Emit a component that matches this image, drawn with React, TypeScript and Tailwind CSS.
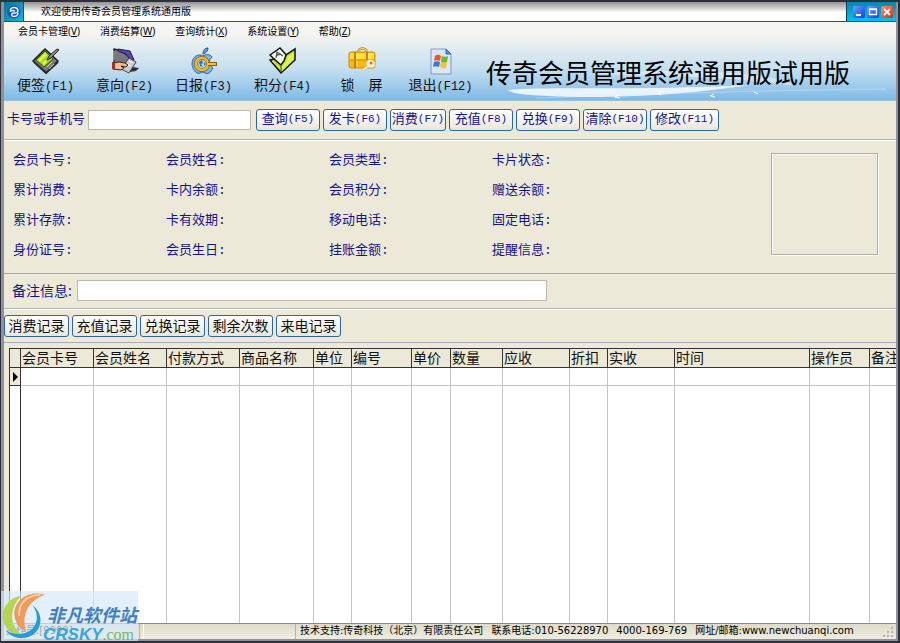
import type { ReactNode } from 'react';

const menus = [
  { text: '会员卡管理', key: 'V' },
  { text: '消费结算', key: 'W' },
  { text: '查询统计', key: 'X' },
  { text: '系统设置', key: 'Y' },
  { text: '帮助', key: 'Z' },
];

const actions = [
  { text: '查询', key: '(F5)', width: 'w-16' },
  { text: '发卡', key: '(F6)', width: 'w-16' },
  { text: '消费', key: '(F7)', width: 'w-14' },
  { text: '充值', key: '(F8)', width: 'w-16' },
  { text: '兑换', key: '(F9)', width: 'w-16' },
  { text: '清除', key: '(F10)', width: 'w-16' },
  { text: '修改', key: '(F11)', width: 'w-[69px]' },
];

const fields = [
  '会员卡号', '会员姓名', '会员类型', '卡片状态',
  '累计消费', '卡内余额', '会员积分', '赠送余额',
  '累计存款', '卡有效期', '移动电话', '固定电话',
  '身份证号', '会员生日', '挂账金额', '提醒信息',
];

const tabs = ['消费记录', '充值记录', '兑换记录', '剩余次数', '来电记录'];

const columns = [
  { name: '会员卡号', width: 'w-[73px]' },
  { name: '会员姓名', width: 'w-[73px]' },
  { name: '付款方式', width: 'w-[73px]' },
  { name: '商品名称', width: 'w-[74px]' },
  { name: '单位', width: 'w-[38px]' },
  { name: '编号', width: 'w-[60px]' },
  { name: '单价', width: 'w-[39px]' },
  { name: '数量', width: 'w-[52px]' },
  { name: '应收', width: 'w-[67px]' },
  { name: '折扣', width: 'w-[38px]' },
  { name: '实收', width: 'w-[67px]' },
  { name: '时间', width: 'w-[135px]' },
  { name: '操作员', width: 'w-[60px]' },
  { name: '备注', width: '' },
];

const NoteIcon = () => (
  <svg width="28" height="28" viewBox="0 0 28 28">
    <path d="M1 14 13 2l13 12-12 12z" fill="#77797b" stroke="#1c1c1c" strokeWidth="1.5" />
    <path d="M2 15l12 11 12-11" fill="none" stroke="#2c2c2c" strokeWidth="2" />
    <path d="M4 13 13 4l8 8-9 8z" fill="#a9d418" stroke="#3f5a0a" />
    <path d="M6 13l7-7 2 2-7 7zM10 16l3-3 2 2-3 3z" fill="#d8f25a" />
    <path d="M15 20l5-5M17 22l5-5" stroke="#c9cbc9" />
    <path d="M27 3l-8 8-4 2 2-4 8-7z" fill="#8a8a8a" stroke="#222" />
  </svg>
);

const IntentIcon = () => (
  <svg width="28" height="28" viewBox="0 0 28 28">
    <path d="M14 24l8-4 6 1-3 3-6 1z" fill="#333" />
    <path d="M3 2l5 1 14 9-4 8-15-4z" fill="#77787e" stroke="#222" strokeWidth="1.3" />
    <path d="M7 2l12 2 4 9-3 1-5-7-8-3z" fill="#5b45ae" stroke="#1e174c" />
    <path d="M18 11l7 4-7 11-8-4z" fill="#c8cdd0" stroke="#444" />
    <path d="M18 14l4 2m-6 1 4 2" stroke="#fff" />
    <path d="M2 16l6-1 6 1 3 2-2 2-5-1 3 2-3 2-8-1z" fill="#f0bd96" stroke="#3b1e18" />
    <path d="M1 15l3 1v7l-3-1z" fill="#a12e28" />
    <path d="M3 4v9" stroke="#b6b7bc" />
  </svg>
);

const ReportIcon = () => (
  <svg width="28" height="28" viewBox="0 0 28 28">
    <path d="M13 7c0-4 2-6 5-6 0 3-2 5-5 6z" fill="#5b9ee5" stroke="#24569a" />
    <path d="M13 9c3-2 7-2 9 1-4 3-3 9 1 11-2 4-5 7-8 5-2-1-3-1-5 0-4 2-8-5-8-9C2 10 8 6 13 9z" fill="#78b5ef" stroke="#2a65ac" />
    <circle cx="12" cy="17" r="6" fill="#b3daf7" stroke="#8d5a08" strokeWidth="4" />
    <circle cx="12" cy="17" r="6" fill="none" stroke="#f6b92e" strokeWidth="2.5" />
    <path d="M9 15l3-2 1 3-2 1 2 3-3-1zM14 15l2 2-2 2z" fill="#2872b7" />
    <path d="M18 17h9" stroke="#8d5a08" strokeWidth="4" />
    <path d="M18 17h8" stroke="#f8c13b" strokeWidth="2" />
  </svg>
);

const PointsIcon = () => (
  <svg width="28" height="28" viewBox="0 0 28 28">
    <path d="M1 8l10-7 9 10-8 8z" fill="#f5f7f4" stroke="#111" strokeWidth="1.5" />
    <path d="M7 11l1-6 6 4M8 8l4-1" fill="none" stroke="#555" strokeWidth="1.3" />
    <path d="M1 13l11 13 14-13V2l-9 6-2 6-3 4-7-6z" fill="#b5d922" stroke="#111" strokeWidth="1.5" />
    <path d="M13 19l4-5 2-5 6-4v7L13 24z" fill="#dcf152" />
    <path d="M3 14l9 8" stroke="#e4f67a" />
    <path d="M12 18v7" stroke="#45560a" />
  </svg>
);

const LockIcon = () => (
  <svg width="28" height="28" viewBox="0 0 28 28">
    <path d="M10 6c0-6 9-6 9 0" fill="none" stroke="#cc8a13" strokeWidth="2.5" />
    <path d="M10 6c0-6 9-6 9 0" fill="none" stroke="#ffe58d" />
    <rect x="1" y="5" width="26" height="16" rx="2" fill="#f9b80e" stroke="#d7870b" />
    <path d="M2 6h24v6H2z" fill="#ffe13a" />
    <path d="M7 5v16M19 5v16" stroke="#b96810" strokeWidth="1.5" />
    <path d="M9 6v14M21 6v9" stroke="#fff08c" />
    <path d="M2 13h24" stroke="#d8890f" />
    <path d="M18 17c0-3 3-5 6-4s4 5 2 7c-2 1-4 1-5 0l-6 4-2-1 6-4z" fill="#fff7e4" stroke="#ecc888" />
    <circle cx="23" cy="16" r="1.5" fill="#e7652a" />
  </svg>
);

const ExitIcon = () => (
  <svg width="28" height="28" viewBox="0 0 28 28">
    <path d="M4 2h15l5 5v20H4z" fill="#dce5fa" stroke="#8197cd" />
    <path d="M19 2v5h5z" fill="#3d8fe0" stroke="#3670b4" />
    <path d="M8 9c3-2 4-1 6 0l-1 5c-2-1-4-1-6 0z" fill="#e75829" />
    <path d="M15 9c2 1 4 1 6 0l-1 6c-2 1-4 1-6 0z" fill="#70b52b" />
    <path d="M7 15c2-1 4-1 6 0l-1 5c-2-1-4-1-6 0z" fill="#3478dc" />
    <path d="M14 15c2 1 4 1 6 0l-1 6c-2 1-4 0-6-1z" fill="#f9c42d" />
  </svg>
);

const tools: { text: string; key: string; icon: ReactNode }[] = [
  { text: '便签', key: '(F1)', icon: <NoteIcon /> },
  { text: '意向', key: '(F2)', icon: <IntentIcon /> },
  { text: '日报', key: '(F3)', icon: <ReportIcon /> },
  { text: '积分', key: '(F4)', icon: <PointsIcon /> },
  { text: '锁　屏', key: '', icon: <LockIcon /> },
  { text: '退出', key: '(F12)', icon: <ExitIcon /> },
];

function TitleBar() {
  return (
    <div className="flex h-5 items-stretch border-b border-[#4a4a4a] bg-gradient-to-b from-[#929292] via-white via-55% to-white">
      <div className="flex w-5 items-center justify-center border-r border-[#164a60] bg-gradient-to-br from-[#0c7094] to-[#18b5e4]">
        <svg width="14" height="14" viewBox="0 0 14 14">
          <circle cx="7" cy="7" r="6.5" fill="#1553b4" />
          <path d="M3 5c2-4 8-3 8 1 0 2-2 2-4 2S4 9 5 11M11 8c0 3-3 4-6 3M3 7c0-1 2-2 5-1" fill="none" stroke="#e3f3ff" strokeWidth="1.5" />
        </svg>
      </div>
      <h1 className="flex flex-1 items-center pl-[17px] text-[10px] text-black">欢迎使用传奇会员管理系统通用版</h1>
      <div className="flex w-[50px] items-center gap-0.5 border-l border-[#0a3b55] bg-gradient-to-b from-[#0787a8] to-[#00c3f2] pl-1.5">
        <button aria-label="最小化" className="h-3 w-3 rounded-xs bg-gradient-to-br from-[#6c9dff] to-[#173fd0]">
          <svg viewBox="0 0 12 12"><path d="M3 9h5" stroke="#fff" strokeWidth="2" /></svg>
        </button>
        <button aria-label="最大化" className="h-3 w-3 rounded-xs bg-gradient-to-br from-[#6c9dff] to-[#173fd0]">
          <svg viewBox="0 0 12 12"><path d="M2.5 3.5h7v5h-7zM2 3h8" fill="none" stroke="#fff" strokeWidth="1.3" /></svg>
        </button>
        <button aria-label="关闭" className="h-3 w-3 rounded-xs bg-gradient-to-br from-[#ff8d68] to-[#d3260a]">
          <svg viewBox="0 0 12 12"><path d="M3 3l6 6M9 3l-6 6" stroke="#fff" strokeWidth="1.8" /></svg>
        </button>
      </div>
    </div>
  );
}

function Header() {
  return (
    <header className="relative border-b border-[#8fc3e4] bg-gradient-to-b from-[#f6f5f2] from-15% via-[#c5dff0] via-60% to-[#7fbae5]">
      <svg className="absolute right-0 bottom-0 h-10 w-[400px]" viewBox="0 0 400 40" preserveAspectRatio="none">
        <path d="M12 30c40-4 130 1 240-5-60 10-140 14-200 11-25-1-38-3-40-6z" fill="#fff" opacity=".8" />
        <path d="M90 14c80-6 190-4 210 12-70-10-130-10-210-12z" fill="#fff" opacity=".4" />
        <path d="M40 38c120-4 230-8 350-9" fill="none" stroke="#dff1fb" opacity=".4" />
        <path d="M118 37l5-2m-4 2 5 1m37-5 4 2m-3-3 3 1" stroke="#fff" />
        <path d="M214 36l4-2m-3 2 4 1m39-5 4 2" stroke="#fff" />
      </svg>
      <nav className="relative flex h-[17px] items-center gap-5 pl-3.5">
        {menus.map((m) => (
          <button key={m.key} className="text-[10px] leading-4 text-black">
            {m.text}(<u>{m.key}</u>)
          </button>
        ))}
      </nav>
      <div className="relative flex items-end pb-[3px]">
        <div className="flex pt-2 pl-0.5">
          {tools.map((t) => (
            <button key={t.text} className="flex w-[79px] flex-col items-center text-[14px] leading-5 text-[#111]">
              {t.icon}
              <span className="whitespace-nowrap">
                {t.text}
                <span className="font-['Liberation_Mono'] text-[12px]">{t.key}</span>
              </span>
            </button>
          ))}
        </div>
        <h2 className="pb-2 pl-1.5 text-[26px] leading-8 whitespace-nowrap text-black">传奇会员管理系统通用版试用版</h2>
      </div>
    </header>
  );
}

const buttonStyle =
  'flex h-[22px] items-center justify-center rounded-[3px] border border-[#2f679c] bg-gradient-to-b from-white to-[#e9e7db] pb-0.5 whitespace-nowrap';

function SearchBar() {
  return (
    <div className="flex items-center gap-[3px] border-b border-[#b3b8ae] pt-2 pb-2 pl-[3px] text-[13px] text-[#14148c] shadow-[0_1px_0_#fff]">
      <label htmlFor="card" className="w-[78px] pb-0.5 whitespace-nowrap">卡号或手机号</label>
      <input id="card" className="mr-0.5 h-5 w-[163px] border border-[#bdbbae] bg-white px-1 outline-none" />
      {actions.map((a) => (
        <button key={a.key} className={`${buttonStyle} ${a.width}`}>
          {a.text}
          <span className="font-['Liberation_Mono'] text-[11px]">{a.key}</span>
        </button>
      ))}
    </div>
  );
}

function MemberInfo() {
  return (
    <section className="flex items-start justify-between border-b border-[#a9a9a2] pt-[3px] pr-[18px] pb-2.5 pl-[9px] text-[13px] text-[#14148c]">
      <div className="grid grid-cols-[153px_163px_163px_auto]">
        {fields.map((f) => (
          <div key={f} className="h-[30px] leading-8">
            {f}<span className="font-['Liberation_Mono']">:</span>
          </div>
        ))}
      </div>
      <div className="mt-2.5 h-[102px] w-[107px] border border-[#b1afaa] shadow-[inset_1px_1px_0_#fff,1px_1px_0_#fff]" />
    </section>
  );
}

function Records() {
  return (
    <div className="min-h-0 flex-1 overflow-hidden pt-[5px] pl-[5px]">
      <table className="h-full w-full table-fixed border-separate border-spacing-0 border-t border-l border-[#333] bg-white text-[14px]">
        <thead>
          <tr className="h-[19px] bg-[#ece9d8]">
            <th className="w-[11px] border-r border-b border-[#333]" />
            {columns.map((c) => (
              <th
                key={c.name}
                className={`overflow-hidden border-r border-b border-[#333] p-0 pl-px text-left leading-[18px] font-normal whitespace-nowrap text-[#111] last:border-r-0 ${c.width}`}
              >
                {c.name}
              </th>
            ))}
          </tr>
        </thead>
        <tbody>
          <tr className="h-[18px]">
            <td className="border-r border-b border-[#333] bg-[#ece9d8] p-0">
              <svg width="10" height="10" viewBox="0 0 10 10"><path d="M3 0l5 5-5 5z" fill="#000" /></svg>
            </td>
            {columns.map((c) => (
              <td key={c.name} className="border-r border-b border-[#c4c4c4] p-0 last:border-r-0" />
            ))}
          </tr>
          <tr>
            <td className="border-r border-[#333] p-0" />
            {columns.map((c) => (
              <td key={c.name} className="border-r border-[#c4c4c4] p-0 last:border-r-0" />
            ))}
          </tr>
        </tbody>
      </table>
    </div>
  );
}

function StatusBar() {
  return (
    <footer className="flex h-4 items-stretch border-t border-[#8e8c7e] bg-gradient-to-b from-[#dedbca] to-[#efedde] font-['DejaVu_Sans','Noto_Sans_CJK_SC',sans-serif] text-[10px] leading-[14px] whitespace-nowrap text-black">
      <div className="w-[136px] border-r border-[#b5b3a3] pl-0.5">操作员:[9999]</div>
      <div className="ml-[3px] w-[153px] border-r border-l border-[#b5b3a3] border-l-white" />
      <div className="flex flex-1 gap-2 pl-1">
        <span>技术支持:传奇科技（北京）有限责任公司</span>
        <span>联系电话:010-56228970</span>
        <span>4000-169-769</span>
        <span>网址/邮箱:www.newchuanqi.com</span>
      </div>
      <svg className="mr-0.5" width="12" height="14" viewBox="0 0 12 14">
        <path d="M9 3h2v2H9zM5 7h2v2H5zM9 7h2v2H9zM1 11h2v2H1zM5 11h2v2H5zM9 11h2v2H9z" fill="#b8b4a2" />
      </svg>
    </footer>
  );
}

function Watermark() {
  return (
    <div className="absolute bottom-0 left-0 h-[50px] w-[137px] bg-[#d7eafa]/70">
      <svg className="absolute top-0 left-0" width="46" height="50" viewBox="0 0 46 52">
        <path d="M20 5C4 7-4 25 4 37c5 8 12 9 16 8C8 36 7 19 20 5z" fill="#b5d552" />
        <path d="M45 4C25-2 12 12 13 25c1 9 6 15 12 17-4-13-1-31 20-38z" fill="#f09a5b" />
        <path d="M40 4C25 4 17 14 18 26" fill="none" stroke="#fbd2ae" strokeWidth="2" />
        <path d="M32 15c10 7 11 21 2 29-9 8-23 6-30-3 8 5 20 5 27-1 7-7 7-17 1-25z" fill="#269cd6" />
      </svg>
      <div className="absolute top-3 left-[46px] whitespace-nowrap">
        <div className="text-[18px] leading-6 font-bold text-[#4180bd] italic">非凡软件站</div>
        <div className="-ml-1 flex items-baseline leading-4">
          <span className="font-['Liberation_Sans'] text-[17px] font-bold text-[#38a5dc] italic">CRSKY</span>
          <span className="font-['Liberation_Serif'] text-[16px] text-[#73b86d]">.com</span>
        </div>
      </div>
    </div>
  );
}

export default function App() {
  return (
    <div className="relative flex h-screen flex-col overflow-hidden border-t-2 border-r-2 border-b-2 border-l border-[#30303a] bg-[#ece9d8] font-['Noto_Sans','Noto_Sans_CJK_SC',sans-serif]">
      <div className="flex min-h-0 flex-1 flex-col border-r-2 border-b-2 border-l-3 border-[#8e929c]">
        <TitleBar />
        <Header />
        <SearchBar />
        <MemberInfo />
        <div className="flex items-center gap-0.5 border-b border-[#b3b8ae] pt-1.5 pb-[7px] pl-2 text-[14px] text-[#14148c] shadow-[0_1px_0_#fff]">
          <label htmlFor="remark" className="w-[63px] whitespace-nowrap">备注信息:</label>
          <input id="remark" className="h-[21px] w-[470px] border border-[#bdbbae] bg-white px-1 outline-none" />
        </div>
        <div className="flex gap-[3px] border-b border-[#a3afbb] pt-1.5 pb-[5px] text-[14px] text-[#111]">
          {tabs.map((t) => (
            <button key={t} className={`${buttonStyle} w-[65px]`}>{t}</button>
          ))}
        </div>
        <Records />
        <StatusBar />
      </div>
      <Watermark />
    </div>
  );
}
